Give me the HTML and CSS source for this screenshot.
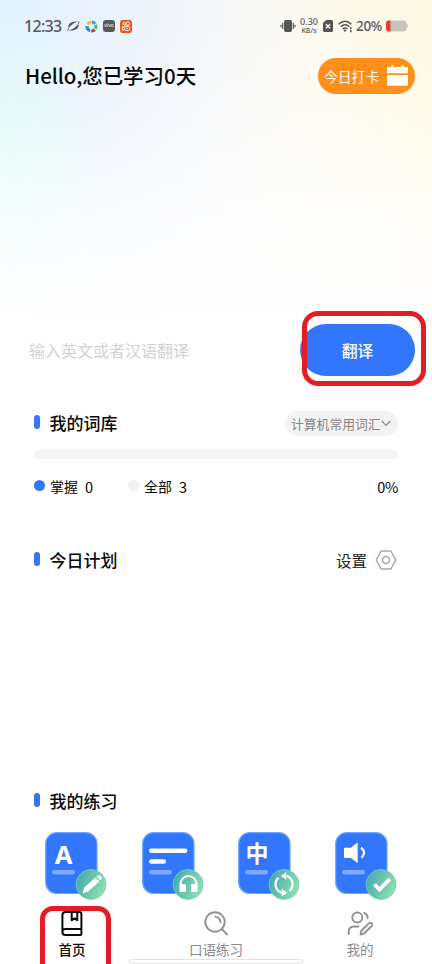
FILE: index.html
```html
<!DOCTYPE html>
<html lang="zh-CN">
<head>
<meta charset="utf-8">
<meta name="viewport" content="width=device-width, initial-scale=1">
<title>我的词库</title>
<link rel="stylesheet" href="styles.css">
</head>
<body>
<div class="app">
  <header class="hero">
    <div class="status">
      <span class="clock">12:33</span>
      <div class="notices">
        <svg width="13" height="14" viewBox="0 0 14 14"><path d="M1.800 9.200C.2 4.500 5 1.200 12.400 2.200C8.500 3 4.500 5.500 1.800 9.200Z M12.200 4.600C13.800 9.500 9 12.800 1.600 11.800C5.500 11 9.500 8.500 12.200 4.600Z" fill="#55595d"/><path d="M1 12Q1 10.600 1.900 9.100M13 2Q13 3.300 12.200 4.700" stroke="#55595d" stroke-width="1" fill="none"/></svg>
        <svg width="13" height="13" viewBox="0 0 14 14"><g fill="none" stroke-width="3.400"><path d="M2.700 4.800A4.800 4.800 0 0 1 6.600 2.200" stroke="#fbc21b"/><path d="M7.300 2.200A4.800 4.800 0 0 1 10.900 4.200" stroke="#22a8ef"/><path d="M11.400 5.200A4.800 4.800 0 0 1 11.100 9.400" stroke="#42c365"/><path d="M10.500 10.200A4.800 4.800 0 0 1 6.700 11.800" stroke="#e82155"/><path d="M5.400 11.500A4.800 4.800 0 0 1 2.300 6.500" stroke="#2888ed"/></g></svg>
        <span class="vivo">vivo</span>
        <svg width="12" height="13" viewBox="0 0 13 13" preserveAspectRatio="none"><rect width="13" height="13" rx="2.500" fill="#ec5513"/><g fill="none" stroke="#fff" stroke-width="1"><circle cx="4.800" cy="3.800" r="1.500"/><circle cx="8.500" cy="3.700" r="1.800"/><rect x="5" y="6.500" width="5.400" height="4" rx="1.200"/><path d="M5 7.200L2.500 6.800V10.200L5 9.800M6.800 8.500H8.600"/></g></svg>
      </div>
      <div class="signals">
        <svg width="16" height="14" viewBox="0 0 16 14"><rect x="4" y="1" width="8" height="12" rx="1.800" fill="#555"/><path d="M2.700 4V10M13.300 4V10M1 5.800V8.200M15 5.800V8.200" stroke="#555" stroke-width="1.200"/></svg>
        <div class="speed"><span>0.30</span><span>KB/s</span></div>
        <svg class="sim" width="10" height="12" viewBox="0 0 10 12"><path d="M3.200 0H8.500Q10 0 10 1.500V10.500Q10 12 8.500 12H1.500Q0 12 0 10.500V3Z" fill="#555"/><path d="M3 4.300L7 8.300M7 4.300L3 8.300" stroke="#fff" stroke-width="1.400"/></svg>
        <svg class="wifi" width="15" height="13" viewBox="0 0 15 13"><g fill="none" stroke="#555" stroke-width="1.500"><path d="M.5 4.300Q7 -1.800 13.500 4.300M2.600 6.700Q7 2.800 11.400 6.700M4.600 9Q7 6.900 9.400 9"/></g><path d="M5.400 10.200Q7 9 8.600 10.200L7 12Z" fill="#555"/><path d="M12.800 7V9.300M12.800 10V12.300" stroke="#555" stroke-width="1.400"/></svg>
        <span class="percent">20%</span>
        <svg width="22" height="12" viewBox="0 0 22 12"><rect width="20.500" height="11" y=".5" rx="3" fill="#c6c5b9"/><path d="M20.300 3Q22 4.500 22 6T20.300 9Z" fill="#c6c5b9"/><path d="M4.500.5V11.500H3Q0 11.500 0 8.500V3.500Q0 .5 3 .5Z" fill="#ed3731"/></svg>
      </div>
    </div>
    <div class="welcome">
      <h1>Hello,您已学习0天</h1>
      <button class="checkin"><span>今日打卡</span>
        <svg width="21" height="21" viewBox="0 0 21 21"><path d="M0 2H4.300V0H6.500V2H14.500V0H16.700V2H21V8.300H0ZM0 10H21V19.500Q21 20.700 19.800 20.700H1.200Q0 20.700 0 19.500Z" fill="#fff"/></svg>
      </button>
    </div>
  </header>

  <div class="translate">
    <span class="placeholder">输入英文或者汉语翻译</span>
    <button class="go">翻译<i class="mark mark-go"></i></button>
  </div>

  <section class="library">
    <div class="heading"><h2>我的词库</h2>
      <button class="book"><span>计算机常用词汇</span><svg width="10" height="7" viewBox="0 0 10 7"><path d="M.8 1L5 5.300L9.200 1" fill="none" stroke="#888" stroke-width="1.200"/></svg></button>
    </div>
    <div class="bar"></div>
    <div class="legend">
      <span class="item known">掌握<b>0</b></span>
      <span class="item all">全部<b>3</b></span>
      <span class="rate">0%</span>
    </div>
  </section>

  <section class="plan">
    <div class="heading"><h2>今日计划</h2>
      <div class="settings"><span>设置</span><svg width="22" height="20" viewBox="0 0 22 20"><path d="M6.200 1H15.800L20.800 10L15.800 19H6.200L1.200 10Z" fill="none" stroke="#a6a6a6" stroke-width="1.500" stroke-linejoin="round"/><circle cx="11" cy="10" r="3.500" fill="none" stroke="#a6a6a6" stroke-width="1.500"/></svg></div>
    </div>
  </section>

  <section class="practice">
    <div class="heading"><h2>我的练习</h2></div>
    <svg class="defs" width="0" height="0"><defs>
      <linearGradient id="mint" x1="0" y1=".3" x2="1" y2=".7"><stop offset="0" stop-color="#43aaae"/><stop offset="1" stop-color="#94e2ae"/></linearGradient>
      <g id="card"><rect x=".7" y=".7" width="51.300" height="60.800" rx="11" fill="#3276fc" stroke="#70a5fb" stroke-width="1.200"/><rect x="7" y="38" width="23" height="4.500" rx="2.200" fill="#7ea9ff"/><circle cx="46" cy="52.500" r="15" fill="url(#mint)" stroke="#78c6c0" stroke-width=".8"/></g>
    </defs></svg>
    <div class="cards">
      <svg viewBox="0 0 62 69"><use href="#card"/><text class="letter" x="9.700" y="32">A</text><path d="M37.500 61.500L39.300 55.500L50.600 45.600L54.300 49.400L43.200 59.500ZM51.600 44.700L53.300 43.200Q54.300 42.600 55.200 43.500L56.600 45Q57.200 46 56.400 46.900L55.200 48.300Z" fill="#fff"/></svg>
      <svg viewBox="0 0 62 69"><use href="#card"/><path d="M9.300 18.700H43.200M9.300 29.500H21.800" stroke="#fff" stroke-width="4.600" stroke-linecap="round"/><path d="M38.500 54V52A8 8 0 0 1 54.500 52V54" fill="none" stroke="#fff" stroke-width="2"/><rect x="37.500" y="52" width="6.500" height="8" rx="1.500" fill="#fff"/><rect x="49" y="52" width="6.500" height="8" rx="1.500" fill="#fff"/></svg>
      <svg viewBox="0 0 62 69"><use href="#card"/><text class="zhong" x="7.600" y="30">中</text><g fill="none" stroke="#fff" stroke-width="2.300"><path d="M43.500 60.600A8.600 8.600 0 0 1 40.500 45.900M48.500 44A8.600 8.600 0 0 1 51.500 58.800"/></g><path d="M42.700 44L48.300 40.200V47.800ZM49.300 60.700L43.700 56.900V64.500Z" fill="#fff"/></svg>
      <svg viewBox="0 0 62 69"><use href="#card"/><path d="M10 15.700H15.800L22.700 10.500V31L15.800 26H10Q9 26 9 25V16.700Q9 15.700 10 15.700Z" fill="#fff"/><path d="M26 15.700Q31.800 20.500 26.500 25.600" fill="none" stroke="#fff" stroke-width="2.300"/><path d="M39.500 52.500L44.500 57.500L54.800 47" fill="none" stroke="#fff" stroke-width="3.800"/></svg>
    </div>
  </section>

  <nav class="tabs">
    <a class="tab active"><svg width="26" height="26" viewBox="0 0 26 26"><g fill="none" stroke="#0b0b0b" stroke-width="2" stroke-linejoin="round"><path d="M22.400 18.500V3.200Q22.400 1 20.200 1H6.500Q3.400 1 3.400 4.200V21M22.400 18H6.300Q3.400 18 3.400 21T6.300 24H20.800Q22.400 24 22.400 22.400V18"/><path d="M12.700 1V9.200L15.500 7.300L18.300 9.200V1"/></g></svg><span>首页</span></a>
    <a class="tab"><svg width="26" height="26" viewBox="0 0 26 26"><g fill="none" stroke="#929292" stroke-width="1.900" stroke-linecap="round"><circle cx="12" cy="11" r="9.700"/><path d="M19 18.200L24 23.500M12.300 5.600Q17 6.300 17.500 11"/></g></svg><span>口语练习</span></a>
    <a class="tab"><svg width="26" height="26" viewBox="0 0 26 26"><g fill="none" stroke="#929292" stroke-width="1.900" stroke-linecap="round" stroke-linejoin="round"><circle cx="10.300" cy="6.500" r="5"/><path d="M17.200 2Q20.700 3.300 20.600 7M1.700 23V21Q1.700 15.500 7 15.500H11.500M13.500 23.500L14.300 19.700L22.300 11.900Q24 11.300 25 12.800T24.400 15.300L16.800 22.700Z"/></g></svg><span>我的</span></a>
    <i class="mark mark-home"></i>
    <i class="indicator"></i>
  </nav>
</div>
</body>
</html>
```
FILE: styles.css
```css
* { box-sizing: border-box; }
body { margin: 0; background: #fefefe; font-family: "Noto Sans CJK SC", sans-serif; color: #090909; }
h1, h2 { margin: 0; font-weight: 500; }
button { border: 0; padding: 0; font: inherit; }
svg { display: block; flex: none; }
.app { width: 432px; height: 964px; overflow: hidden; display: flex; flex-direction: column; }

.hero {
  height: 324px; flex: none;
  background:
    linear-gradient(180deg, rgba(254,254,254,0) 5%, rgba(254,254,254,.35) 35%, rgba(254,254,254,.75) 65%, #fefefe 98%),
    radial-gradient(ellipse 120px 190px at -10px 190px, #d8fdf5, rgba(224,252,248,0)),
    linear-gradient(90deg, #e2f2fd 0%, #ebf2fd 25%, #f5f7fa 48%, #fbf9f2 68%, #fff9e2 100%);
}
.status { height: 52px; display: flex; align-items: center; padding: 0 24px; color: #55585a; }
.clock { width: 43px; font: 500 16px/20px "Noto Sans", sans-serif; letter-spacing: -.7px; }
.notices { display: flex; align-items: center; gap: 5px; }
.vivo { width: 12px; height: 12px; border-radius: 3px; background: #56585c; color: #fff; font: 5px/11px "Noto Sans", sans-serif; text-align: center; }
.signals { margin-left: auto; display: flex; align-items: center; }
.speed { width: 20px; margin: 0 4px 0 3px; display: flex; flex-direction: column; align-items: center; font: 500 9px/10px "Noto Sans", sans-serif; }
.speed span:last-child { font-size: 7px; line-height: 8px; }
.wifi { margin: 0 3px 0 5px; }
.percent { width: 27px; margin-right: 3px; font: 500 13.500px/20px "Noto Sans", sans-serif; letter-spacing: -.3px; }

.welcome { display: flex; align-items: center; justify-content: space-between; padding: 6px 17px 0 25px; }
h1 { font-size: 20.500px; line-height: 34px; margin-top: -2px; letter-spacing: -.05px; white-space: nowrap; }
.checkin { width: 97px; height: 36px; border-radius: 18px; background: #ff8f1b; color: #fff; display: flex; align-items: center; padding: 0 7px 0 6px; justify-content: space-between; font-size: 13.800px; }
.checkin svg { margin-bottom: 2px; }

.translate { height: 52px; flex: none; display: flex; align-items: center; justify-content: space-between; padding: 0 17px 0 29px; }
.placeholder { font-size: 16px; color: #d2d2d2; font-weight: 400; }
.go { position: relative; width: 115px; height: 52px; border-radius: 26px; background: #3276fc; color: #fff; font-size: 15.800px; font-weight: 500; }
.mark { position: absolute; border: 5px solid #e31d25; border-radius: 16px; }
.mark-go { left: 2px; top: -13px; width: 124px; height: 75px; }

section { flex: none; padding: 0 34px; }
.heading { height: 26px; display: flex; align-items: center; justify-content: space-between; }
h2 { display: flex; align-items: center; gap: 9.500px; font-size: 17px; line-height: 26px; }
h2::before { content: ""; width: 6px; height: 14px; border-radius: 3px; background: #3276fc; margin-top: -2px; }
.library { height: 137px; padding-top: 34px; }
.book { width: 113px; height: 25px; border-radius: 13px; background: #f3f3f3; color: #858585; display: flex; align-items: center; padding: 0 7px 0 6px; justify-content: space-between; font-size: 12.800px; white-space: nowrap; }
.bar { height: 9px; margin-top: 14px; border-radius: 5px; background: #f4f5f6; }
.legend { display: flex; align-items: center; height: 24px; margin-top: 15px; font-size: 14px; }
.item { display: flex; align-items: center; gap: 5px; width: 94px; }
.item::before { content: ""; width: 11px; height: 11px; border-radius: 50%; background: #3276fc; margin-top: -2px; }
.all::before { background: #f0f1f3; }
.item b { font-weight: 400; margin-left: 2px; font-size: 14.500px; }
.rate { margin-left: auto; font-size: 14.500px; letter-spacing: -.3px; }
.plan { height: 241px; padding-top: 34px; }
.settings { display: flex; align-items: center; gap: 8px; margin-right: 1px; font-size: 15.500px; color: #222; }
.practice { height: 156px; padding-top: 34px; }
.defs { position: absolute; }
.cards { display: flex; justify-content: space-between; margin: 18px -9px 0 11px; padding-right: 10px; }
.cards svg { width: 62px; height: 69px; }
.letter { font: 700 25.500px "Noto Sans", sans-serif; fill: #fff; }
.zhong { font: 700 23px "Noto Sans CJK SC", sans-serif; fill: #fff; }

.tabs { position: relative; flex: 1; display: flex; }
.tab { width: 144px; padding-top: 1px; display: flex; flex-direction: column; align-items: center; font-size: 13.500px; line-height: 25px; color: #8b8b8b; }
.tab.active { color: #0b0b0b; font-weight: 500; }
.mark-home { left: 40px; top: -4px; width: 71px; height: 70px; border-radius: 13px; }
.indicator { position: absolute; left: 129px; top: 49px; width: 174px; height: 5px; border-radius: 3px; border: 1px solid #e2e2e2; background: #fff; }
```
